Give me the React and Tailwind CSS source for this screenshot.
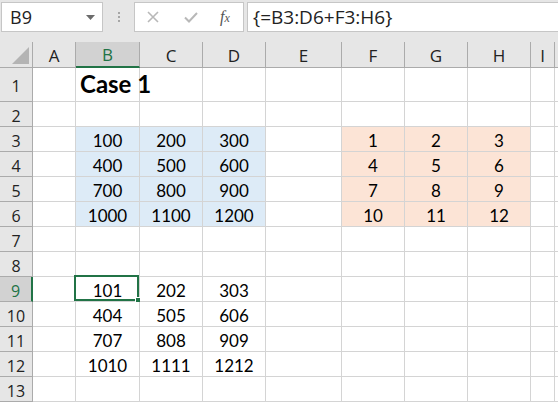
import React from "react";

const cols = ["A", "B", "C", "D", "E", "F", "G", "H", "I"];
const blue = { B: [100, 400, 700, 1000], C: [200, 500, 800, 1100], D: [300, 600, 900, 1200] };
const orange = { F: [1, 4, 7, 10], G: [2, 5, 8, 11], H: [3, 6, 9, 12] };
const result = { B: [101, 404, 707, 1010], C: [202, 505, 808, 1111], D: [303, 606, 909, 1212] };

function cellContent(r, c) {
  if (r === 1 && c === "B") return { text: "Case 1", kind: "title" };
  if (r >= 3 && r <= 6 && blue[c]) return { text: blue[c][r - 3], bg: "bg-[#ddebf7]" };
  if (r >= 3 && r <= 6 && orange[c]) return { text: orange[c][r - 3], bg: "bg-[#fce4d6]" };
  if (r >= 9 && r <= 12 && result[c]) return { text: result[c][r - 9] };
  return {};
}

function Cell({ r, c }) {
  const info = cellContent(r, c);
  const selected = r === 9 && c === "B";
  if (info.kind === "title") {
    return (
      <div className="relative z-10 border-r border-b border-[#d4d4d4] overflow-visible">
        <span className="absolute left-[4px] bottom-[5px] whitespace-nowrap text-[24px] font-bold leading-none text-black [font-family:Lato,sans-serif]">
          Case 1
        </span>
      </div>
    );
  }
  return (
    <div
      className={`relative flex items-end justify-center pb-[2px] border-r border-b border-[#d4d4d4] text-[17px] leading-none text-black [font-family:Lato,sans-serif] ${info.bg || "bg-white"}`}
    >
      <span>{info.text}</span>
      {selected && (
        <>
          <div className="absolute -left-[2px] -top-[2px] right-0 bottom-0 border-2 border-[#217346] pointer-events-none" />
          <div className="absolute -right-[3px] -bottom-[3px] w-[5px] h-[5px] bg-[#217346] border border-white box-content" />
        </>
      )}
    </div>
  );
}

export default function App() {
  const rows = Array.from({ length: 13 }, (_, i) => i + 1);
  return (
    <div className="w-[558px] h-[404px] overflow-hidden bg-white select-none">
      {/* Formula bar */}
      <div className="h-[42px] bg-[#e6e6e6] flex items-start pt-[2px] pl-[1px]">
        <div className="w-[102px] h-[30px] bg-white border border-[#c6c6c6] flex items-center justify-between pl-[8px] pr-[7px]">
          <span className="text-[18px] leading-none text-[#222] [font-family:'Open_Sans',sans-serif]">B9</span>
          <svg width="9" height="5" viewBox="0 0 9 5">
            <path d="M0 0 H9 L4.5 5 Z" fill="#6b6b6b" />
          </svg>
        </div>
        <div className="w-[31px] h-[30px] flex flex-col items-center justify-center gap-[2px]">
          <div className="w-[2px] h-[2px] bg-[#a6a6a6]" />
          <div className="w-[2px] h-[2px] bg-[#a6a6a6]" />
          <div className="w-[2px] h-[2px] bg-[#a6a6a6]" />
        </div>
        <div className="w-[110px] h-[30px] bg-white border border-[#c6c6c6] flex items-center">
          <svg className="ml-[12px]" width="12" height="12" viewBox="0 0 12 12">
            <path d="M1 1 L11 11 M11 1 L1 11" stroke="#b8b8b8" strokeWidth="1.6" />
          </svg>
          <svg className="ml-[25px]" width="14" height="11" viewBox="0 0 14 11">
            <path d="M1 5.5 L5 9.5 L13 1" stroke="#b8b8b8" strokeWidth="2" fill="none" />
          </svg>
          <span className="ml-[22px] text-[16px] italic leading-none text-[#555] [font-family:'Liberation_Serif',serif]">
            f<span className="text-[12px]">x</span>
          </span>
        </div>
        <div className="ml-[3px] flex-1 h-[30px] bg-white border border-[#c6c6c6] border-r-0 flex items-center pl-[5px]">
          <span className="text-[19px] leading-none text-[#222] [font-family:'Open_Sans',sans-serif]">{"{=B3:D6+F3:H6}"}</span>
        </div>
      </div>

      {/* Sheet */}
      <div className="grid grid-cols-[33px_43px_64px_63px_63px_76px_63px_63px_63px_24px_1fr] grid-rows-[26px_34px_repeat(12,25px)]">
        {/* corner */}
        <div className="bg-[#e6e6e6] border-r border-b border-[#ababab] relative">
          <svg className="absolute right-[3px] bottom-[3px]" width="17" height="17" viewBox="0 0 17 17">
            <path d="M17 0 V17 H0 Z" fill="#b4b4b4" />
          </svg>
        </div>
        {cols.map((c) => (
          <div
            key={c}
            className={`flex items-center justify-center pt-[1px] text-[17px] leading-none [font-family:'Open_Sans',sans-serif] border-r border-[#ababab] ${
              c === "B"
                ? "bg-[#d2d2d2] text-[#217346] border-b-2 border-b-[#217346]"
                : "bg-[#e6e6e6] text-[#222] border-b border-b-[#ababab]"
            }`}
          >
            {c}
          </div>
        ))}
        <div className="bg-[#e6e6e6] border-b border-[#ababab]" />

        {rows.map((r) => (
          <React.Fragment key={r}>
            <div
              className={`flex items-center justify-center pt-[3px] text-[16px] leading-none [font-family:'Open_Sans',sans-serif] border-b border-[#ababab] ${
                r === 9
                  ? "bg-[#d2d2d2] text-[#217346] border-r-2 border-r-[#217346]"
                  : "bg-[#e6e6e6] text-[#222] border-r border-r-[#ababab]"
              }`}
            >
              {r}
            </div>
            {cols.map((c) => (
              <Cell key={c} r={r} c={c} />
            ))}
            <div className="border-b border-[#d4d4d4]" />
          </React.Fragment>
        ))}
      </div>
    </div>
  );
}
